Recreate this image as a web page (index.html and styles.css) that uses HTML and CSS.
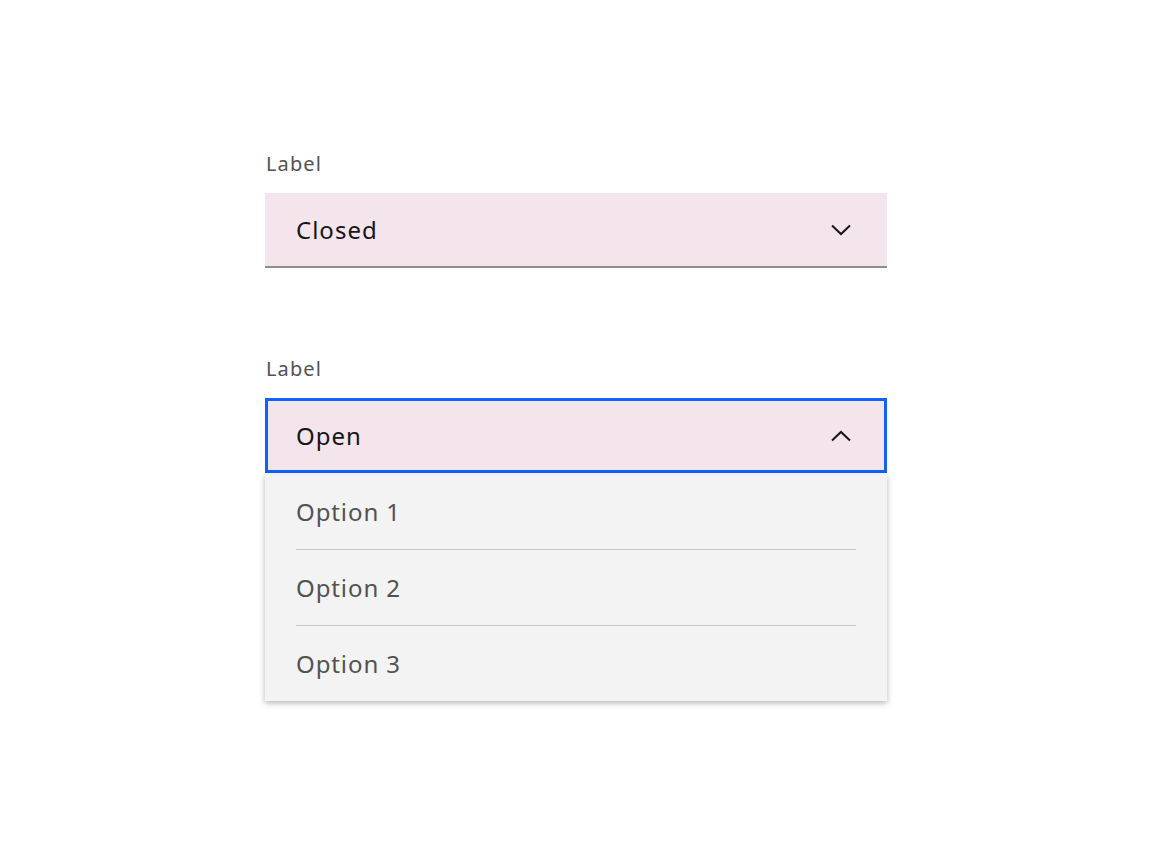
FILE: index.html
```html
<!DOCTYPE html>
<html>
<head>
<meta charset="utf-8">
<link rel="stylesheet" href="styles.css">
</head>
<body>
<div class="page">
  <div class="group">
    <div class="label">Label</div>
    <div class="field closed">
      <span class="value">Closed</span>
      <svg class="chev" width="20" height="12" viewBox="0 0 20 12"><path d="M1 1.5 L10 10 L19 1.5" fill="none" stroke="#161616" stroke-width="2"/></svg>
    </div>
  </div>
  <div class="group">
    <div class="label">Label</div>
    <div class="field open">
      <span class="value">Open</span>
      <svg class="chev" width="20" height="12" viewBox="0 0 20 12"><path d="M1 10.5 L10 2 L19 10.5" fill="none" stroke="#161616" stroke-width="2"/></svg>
    </div>
    <div class="menu">
      <div class="option">Option 1</div>
      <div class="option">Option 2</div>
      <div class="option">Option 3</div>
    </div>
  </div>
</div>
</body>
</html>
```

FILE: styles.css
```css
html, body {
  margin: 0;
  padding: 0;
  background: #ffffff;
}
.page {
  padding: 150px 0 120px 265px;
  display: flex;
  flex-direction: column;
  gap: 87px;
  font-family: "Noto Sans", "Open Sans", sans-serif;
}
.group {
  width: 622px;
  display: flex;
  flex-direction: column;
}
.label {
  font-size: 20px;
  line-height: 28px;
  color: #525252;
  margin-bottom: 15px;
  padding-left: 1px;
  letter-spacing: 1.1px;
}
.field {
  box-sizing: border-box;
  height: 75px;
  background: #f4e4ec;
  display: flex;
  align-items: center;
  justify-content: space-between;
  padding: 0 36px 0 31px;
  color: #161616;
  font-size: 24px;
  letter-spacing: 1px;
}
.field.closed {
  border-bottom: 2px solid #8d8d8d;
}
.field.open {
  border: 3px solid #0f62fe;
  padding-left: 28px;
  padding-right: 33px;
}
.value {
  line-height: 32px;
}
.chev {
  display: block;
}
.menu {
  margin-top: 1px;
  background: #f3f3f3;
  box-shadow: 0 2px 6px rgba(0, 0, 0, 0.3);
  padding: 0 31px;
}
.option {
  height: 76px;
  display: flex;
  align-items: center;
  font-size: 24px;
  color: #525252;
  letter-spacing: 0.9px;
  border-top: 1px solid #c6c6c6;
  box-sizing: border-box;
}
.option:first-child {
  border-top: none;
  height: 75px;
}
```
